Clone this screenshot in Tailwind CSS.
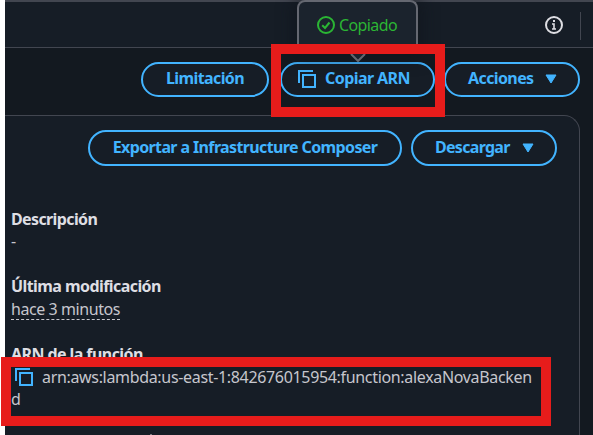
<!DOCTYPE html>
<html lang="es">
<head>
<meta charset="utf-8">
<title>Función Lambda</title>
<script src="https://cdn.jsdelivr.net/npm/@tailwindcss/browser@4"></script>
</head>
<body class="bg-white pl-[5px] overflow-hidden">
<div class="relative flex h-[435px] w-[588px] flex-col overflow-hidden bg-[#131920] text-[16px] text-[#c6c6cd] font-['Noto_Sans',sans-serif]">
  <header class="flex h-12 shrink-0 items-center justify-end border-t-2 border-b border-t-[#424650] border-b-[#424650] bg-[#161d26] pr-[12px]">
    <svg class="mt-px mr-[17px] size-[18px]" viewBox="0 0 18 18" fill="none" stroke="#dedee3"><circle cx="9" cy="9" r="8" stroke-width="2"/><path d="M7 8h2v5M7 13h4" stroke-width="1.600"/><path d="M8 5h2" stroke-width="2"/></svg>
    <span class="mt-[3px] h-[28px] w-px bg-[#424650]"></span>
  </header>
  <nav class="flex h-[67px] shrink-0 items-start justify-end pt-[14px] pr-[13px] font-bold leading-5 text-[#42b4ff]">
    <button class="mr-[11px] flex h-[35px] w-[128px] items-center justify-center rounded-full border-2 border-[#42b4ff] bg-[#161d26] pb-[3px]"><span class="tracking-[-0.6px]">Limitación</span></button>
    <button class="mr-[9px] flex h-[35px] w-[155px] items-center rounded-full border-2 border-[#42b4ff] bg-[#161d26] pb-[3px] pl-[16px]">
      <svg class="mt-px mr-[9px] size-[18px]" viewBox="0 0 18 18" fill="none" stroke="#42b4ff" stroke-width="2"><path d="M1 13V1h14M5 5h12v12H5z"/></svg>
      <span class="tracking-[-0.57px]">Copiar ARN</span></button>
    <button class="flex h-[35px] w-[136px] items-center rounded-full border-2 border-[#42b4ff] bg-[#161d26] pb-[3px] pl-[22px]"><span class="w-[77px] text-left tracking-[-0.6px]">Acciones</span><svg class="mt-px h-[10px] w-[12px]" viewBox="0 0 12 10"><path d="M1 1h10L6 9z" fill="#42b4ff" stroke="#42b4ff" stroke-linejoin="round"/></svg></button>
  </nav>
  <main class="h-[340px] w-[575px] shrink-0 rounded-tr-[16px] border-t border-r border-[#424650] bg-[#161d26] pt-[14px]">
    <div class="flex justify-end pr-[22px] font-bold leading-5 text-[#42b4ff]">
      <button class="mr-[9px] flex h-[36px] w-[314px] items-center justify-center rounded-full border-2 border-[#42b4ff] pb-[2px]"><span class="whitespace-nowrap tracking-[-0.62px]">Exportar a Infrastructure Composer</span></button>
      <button class="flex h-[36px] w-[146px] items-center rounded-full border-2 border-[#42b4ff] pb-[2px] pl-[22px]"><span class="w-[87px] text-left tracking-[-0.7px]">Descargar</span><svg class="mt-px h-[10px] w-[12px]" viewBox="0 0 12 10"><path d="M1 1h10L6 9z" fill="#42b4ff" stroke="#42b4ff" stroke-linejoin="round"/></svg></button>
    </div>
    <dl class="pt-[42px] pl-[6px] leading-[22px]">
      <dt class="font-bold text-[#dedee3]"><span class="tracking-[-0.62px]">Descripción</span></dt>
      <dd class="mb-[23px]">-</dd>
      <dt class="font-bold text-[#dedee3]"><span class="tracking-[-0.57px]">Última modificación</span></dt>
      <dd class="mb-[23px] h-[22px] pt-px"><span class="inline-block h-[22px] border-b border-dashed border-[#c6c6cd] tracking-[-0.43px]">hace 3 minutos</span></dd>
      <dt class="pt-px font-bold text-[#dedee3]"><span class="tracking-[-0.57px]">ARN de la función</span></dt>
      <dd class="whitespace-nowrap pt-px"><svg class="mr-[9px] ml-[4px] inline-block size-[18px] align-[-3px]" viewBox="0 0 18 18" fill="none" stroke="#42b4ff" stroke-width="2"><path d="M1 13V1h14M5 5h12v12H5z"/></svg><span class="tracking-[-0.33px]">arn:aws:lambda:us-east-1:842676015954:function:alexaNovaBacken</span><br>d</dd>
    </dl>
  </main>
  <div class="absolute top-0 left-[292px] h-[54px] w-[121px] rounded-t-[8px] border-2 border-b-0 border-[#656871] bg-[#1b232d] shadow-[0_0_16px_4px_#0f141a99]">
    <div class="flex items-center pt-[12px] pl-[18px] leading-[22px] text-[#2bb534]"><svg class="mr-[4px] size-[18px]" viewBox="0 0 18 18" fill="none" stroke="#2bb534" stroke-width="2"><circle cx="9" cy="9" r="8"/><path d="M5.2 9.2 8 12l4.500-5.500"/></svg><span class="tracking-[-0.6px]">Copiado</span></div>
  </div>
  <svg class="absolute top-[54px] left-[344px] h-[8px] w-[18px]" viewBox="0 0 18 8"><path d="M2 0 9 7l7-7" fill="#1b232d" stroke="#656871" stroke-width="2"/></svg>
  <div class="absolute top-[44px] left-[266px] h-[73px] w-[174px] border-10 border-[#e71c1b]"></div>
  <span class="absolute top-[434px] left-[145px] h-px w-[2px] bg-[#777a80]"></span>
</div>
<div class="absolute top-[357px] left-[1px] h-[69px] w-[550px] border-10 border-[#e71c1b]"></div>
</body>
</html>
